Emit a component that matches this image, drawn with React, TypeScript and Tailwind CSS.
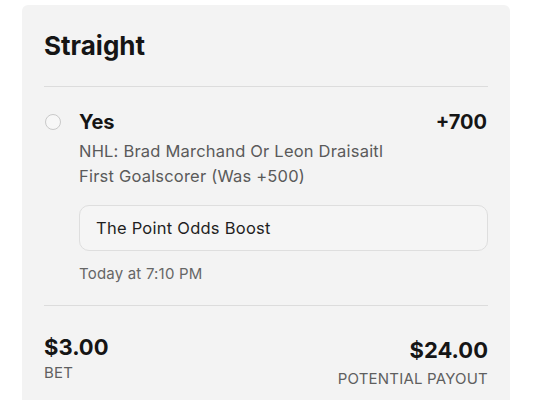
export default function App() {
  return (
    <div className="min-h-screen bg-white pt-[5px] pl-[22px]" style={{ fontFamily: 'Inter, "Noto Sans", sans-serif' }}>
      <div className="w-[488px] rounded-t-[6px] bg-[#f3f3f3] px-[22px] pb-6">
        {/* header */}
        <h1 className="pt-[25px] text-[26px] font-bold leading-[32px] text-[#151515]">Straight</h1>
        <div className="mt-6 h-px bg-[#dcdcdc]" />

        {/* selection */}
        <div className="mt-[21px] flex items-center">
          <span className="ml-[1px] h-4 w-4 shrink-0 rounded-full border border-[#c9c9c9] bg-[#f7f7f7]" />
          <span className="ml-[18px] text-[20px] font-bold leading-[28px] text-[#151515]">Yes</span>
          <span className="ml-auto mr-[1px] text-[20px] font-bold leading-[28px] text-[#151515]">+700</span>
        </div>
        <div className="pl-[35px]">
          <p className="mt-[3px] text-[16.5px] leading-[25px] tracking-[0.2px] text-[#5a5a5a]">
            NHL: Brad Marchand Or Leon Draisaitl
            <br />
            First Goalscorer (Was +500)
          </p>
          <div className="mt-[16px] flex h-[46px] items-center rounded-[10px] border border-[#dedede] bg-[#f5f5f5] px-4 text-[16.5px] tracking-[0.25px] text-[#1f1f1f]">
            The Point Odds Boost
          </div>
          <p className="mt-[13px] text-[15px] leading-[20px] tracking-[0.2px] text-[#666]">Today at 7:10 PM</p>
        </div>
        <div className="mt-[21px] h-px bg-[#dcdcdc]" />

        {/* totals */}
        <div className="mt-[27px] flex justify-between">
          <div>
            <div className="text-[22px] font-bold leading-[28px] text-[#151515]">$3.00</div>
            <div className="mt-[2px] text-[15px] leading-[20px] tracking-[0.2px] text-[#5f5f5f]">BET</div>
          </div>
          <div className="mt-[3px] text-right">
            <div className="text-[22px] font-bold leading-[28px] text-[#151515]">$24.00</div>
            <div className="mt-[5px] text-[15px] leading-[20px] tracking-[0.2px] text-[#5f5f5f]">POTENTIAL PAYOUT</div>
          </div>
        </div>
      </div>
    </div>
  );
}
